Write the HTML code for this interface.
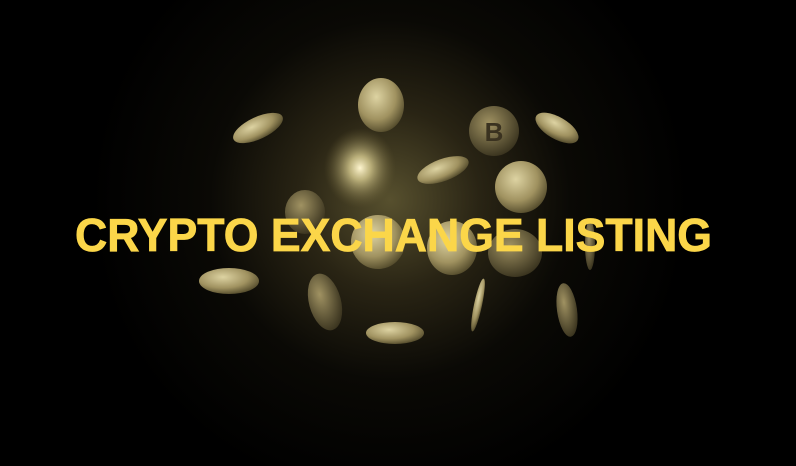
<!DOCTYPE html>
<html><head><style>html,body{margin:0;padding:0;background:#000;}svg{display:block}</style></head>
<body>
<svg width="796" height="466" viewBox="0 0 796 466" xmlns="http://www.w3.org/2000/svg">
<defs>
<radialGradient id="bg" cx="390" cy="200" r="300" gradientUnits="userSpaceOnUse">
<stop offset="0" stop-color="#57502e"/><stop offset="0.3" stop-color="#292414"/><stop offset="0.6" stop-color="#0a0905"/><stop offset="1" stop-color="#000"/></radialGradient>
<radialGradient id="c" cx="0.4" cy="0.35" r="0.7"><stop offset="0" stop-color="#ddd3a2"/><stop offset="0.6" stop-color="#a09260"/><stop offset="1" stop-color="#4e4628"/></radialGradient>
<radialGradient id="d" cx="0.4" cy="0.35" r="0.7"><stop offset="0" stop-color="#a09262"/><stop offset="1" stop-color="#36301c"/></radialGradient>
<radialGradient id="g" cx="0.5" cy="0.5" r="0.5"><stop offset="0" stop-color="#fff6d0"/><stop offset="0.3" stop-color="#d8cc90" stop-opacity="0.8"/><stop offset="1" stop-color="#6a5e35" stop-opacity="0"/></radialGradient>
</defs>
<rect width="796" height="466" fill="url(#bg)"/>
<ellipse cx="360" cy="168" rx="36" ry="40" fill="url(#g)"/>
<ellipse cx="258" cy="128" rx="27" ry="11" transform="rotate(-25 258 128)" fill="url(#c)"/>
<ellipse cx="381" cy="105" rx="23" ry="27" fill="url(#c)"/>
<ellipse cx="494" cy="131" rx="25" ry="25" fill="url(#d)"/>
<text x="494" y="141" font-family="Liberation Sans" font-weight="bold" font-size="26" fill="#3a3220" text-anchor="middle">B</text>
<ellipse cx="557" cy="128" rx="24" ry="11" transform="rotate(30 557 128)" fill="url(#c)"/>
<ellipse cx="443" cy="170" rx="27" ry="11" transform="rotate(-20 443 170)" fill="url(#c)"/>
<ellipse cx="521" cy="187" rx="26" ry="26" fill="url(#c)"/>
<ellipse cx="305" cy="212" rx="20" ry="22" fill="url(#d)"/>
<ellipse cx="378" cy="242" rx="27" ry="27" fill="url(#c)"/>
<ellipse cx="452" cy="248" rx="25" ry="27" fill="url(#c)"/>
<ellipse cx="515" cy="253" rx="27" ry="24" fill="url(#d)"/>
<ellipse cx="590" cy="245" rx="5" ry="25" fill="url(#d)"/>
<ellipse cx="229" cy="281" rx="30" ry="13" fill="url(#c)"/>
<ellipse cx="325" cy="302" rx="16" ry="29" transform="rotate(-15 325 302)" fill="url(#d)"/>
<ellipse cx="395" cy="333" rx="29" ry="11" fill="url(#c)"/>
<ellipse cx="478" cy="305" rx="4" ry="27" transform="rotate(12 478 305)" fill="url(#c)"/>
<ellipse cx="567" cy="310" rx="10" ry="27" transform="rotate(-8 567 310)" fill="url(#d)"/>
<text x="75" y="251" textLength="637" lengthAdjust="spacingAndGlyphs" font-family="Liberation Sans, sans-serif" font-weight="bold" font-size="46" fill="#fbd649" stroke="#fbd649" stroke-width="0.8">CRYPTO EXCHANGE LISTING</text>
</svg>
</body></html>
